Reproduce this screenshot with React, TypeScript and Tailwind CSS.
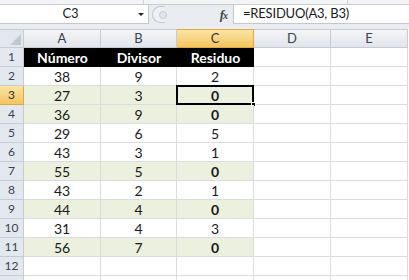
import React from 'react';

const rows = [
    { a: 38, b: 9, c: 2 },
    { a: 27, b: 3, c: 0 },
    { a: 36, b: 9, c: 0 },
    { a: 29, b: 6, c: 5 },
    { a: 43, b: 3, c: 1 },
    { a: 55, b: 5, c: 0 },
    { a: 43, b: 2, c: 1 },
    { a: 44, b: 4, c: 0 },
    { a: 31, b: 4, c: 3 },
    { a: 56, b: 7, c: 0 },
];

const cols = ['A', 'B', 'C', 'D', 'E'];
const widths = ['w-[77px]', 'w-[76px]', 'w-[77px]', 'w-[77px]', 'w-[77px]'];

function RowHead({ n, active }: { n?: number; active?: boolean }) {
    return (
        <div
            className={
                'w-[24px] h-full shrink-0 flex items-center justify-center text-[12px] border-r border-b ' +
                (active
                    ? 'bg-gradient-to-b from-[#fbe4a4] to-[#f4c65f] border-[#e2a83e] text-[#333]'
                    : 'bg-[#e3e8ef] border-[#c6ccd4] text-[#3b4350]')
            }
        >
            {n}
        </div>
    );
}

export default function App() {
    return (
        <div className="w-[409px] h-[280px] overflow-hidden bg-[#e9ecf0] font-['Lato','Liberation_Sans',sans-serif] text-[#1a1a1a]">
            {/* strip from ribbon above */}
            <div className="h-[5px] bg-[#f3f4f6] border-b border-[#c9cdd2] flex">
                <div className="w-[144px] border-r border-[#cfd3d8]" />
                <div className="w-[204px] border-r border-[#cfd3d8]" />
            </div>

            {/* formula bar */}
            <div className="h-[19px] flex items-stretch">
                <div className="w-[149px] bg-white border-r border-b border-[#c2c7ce] flex items-center">
                    <span className="flex-1 text-center text-[13px] pl-[3px]">C3</span>
                    <span className="w-0 h-0 border-l-[3px] border-r-[3px] border-t-[3px] border-l-transparent border-r-transparent border-t-[#222] mr-[4px]" />
                </div>
                <div className="flex-1 flex items-center">
                    <div className="ml-[3px] w-[13px] h-[17px] rounded-l-full border border-r-0 border-[#c2c7ce] bg-[#eef0f3] flex items-center justify-end">
                        <div className="w-[8px] h-[8px] rounded-full border border-[#c8ccd2] bg-[#e2e5e9] -mr-[2px]" />
                    </div>
                    <div className="flex-1" />
                    <span className="font-['Liberation_Serif',serif] italic font-bold text-[13px] text-[#444] mr-[6px] tracking-[-1px]">
                        f<span className="text-[10px]">x</span>
                    </span>
                </div>
                <div className="w-[176px] bg-white border-l border-b border-[#c2c7ce] flex items-center pl-[9px] text-[13px] tracking-[-0.2px]">
                    =RESIDUO(A3, B3)
                </div>
            </div>

            <div className="h-[5px]" />

            {/* column header */}
            <div className="h-[19px] flex bg-white">
                <div className="w-[24px] h-full shrink-0 bg-[#e3e8ef] border-r border-b border-t border-[#c6ccd4] relative">
                    <svg className="absolute right-[2px] bottom-[2px]" width="11" height="11" viewBox="0 0 11 11">
                        <polygon points="11,0 11,11 0,11" fill="#c3c8cf" />
                    </svg>
                </div>
                {cols.map((c, i) => (
                    <div
                        key={c}
                        className={
                            widths[i] +
                            ' h-full shrink-0 flex items-center justify-center text-[13px] border-r border-b border-t ' +
                            (c === 'C'
                                ? 'bg-gradient-to-b from-[#fbe4a4] to-[#f4c65f] border-[#e2a83e] text-[#333]'
                                : 'bg-gradient-to-b from-[#f4f5f7] to-[#e2e5ea] border-[#c6ccd4] text-[#3b4350]')
                        }
                    >
                        {c}
                    </div>
                ))}
            </div>

            {/* row 1 */}
            <div className="h-[19px] flex bg-white">
                <RowHead n={1} />
                <div className="w-[77px] h-full bg-black text-white font-bold text-[14px] flex items-center justify-center">Número</div>
                <div className="w-[76px] h-full bg-black text-white font-bold text-[14px] flex items-center justify-center">Divisor</div>
                <div className="w-[77px] h-full bg-black text-white font-bold text-[14px] flex items-center justify-center">Residuo</div>
                <div className="w-[77px] h-full border-r border-b border-[#dadcdd]" />
                <div className="w-[77px] h-full border-r border-b border-[#dadcdd]" />
            </div>

            {rows.map((r, i) => {
                const zero = r.c === 0;
                const bg = zero ? 'bg-[#ebf1de]' : 'bg-white';
                const n = i + 2;
                return (
                    <div key={n} className="h-[19px] flex bg-white">
                        <RowHead n={n} active={n === 3} />
                        <div className={'w-[77px] h-full border-r border-b border-[#dadcdd] flex items-center justify-center text-[14px] ' + bg}>{r.a}</div>
                        <div className={'w-[76px] h-full border-r border-b border-[#dadcdd] flex items-center justify-center text-[14px] ' + bg}>{r.b}</div>
                        <div className={'w-[77px] h-full border-r border-b border-[#dadcdd] flex items-center justify-center text-[14px] relative ' + bg + (zero ? ' font-bold' : '')}>
                            {r.c}
                            {n === 3 && (
                                <>
                                    <div className="absolute -left-[1px] -top-[1px] -right-[1px] -bottom-[1px] border-2 border-black" />
                                    <div className="absolute -right-[3px] -bottom-[3px] w-[5px] h-[5px] bg-black border border-white" />
                                </>
                            )}
                        </div>
                        <div className="w-[77px] h-full border-r border-b border-[#dadcdd]" />
                        <div className="w-[77px] h-full border-r border-b border-[#dadcdd]" />
                    </div>
                );
            })}

            <div className="h-[19px] flex bg-white">
                <RowHead n={12} />
                {widths.map((w, i) => (
                    <div key={i} className={w + ' h-full border-r border-b border-[#dadcdd]'} />
                ))}
            </div>
            <div className="h-[19px] flex bg-white">
                <RowHead />
                {widths.map((w, i) => (
                    <div key={i} className={w + ' h-full border-r border-b border-[#dadcdd]'} />
                ))}
            </div>
        </div>
    );
}
